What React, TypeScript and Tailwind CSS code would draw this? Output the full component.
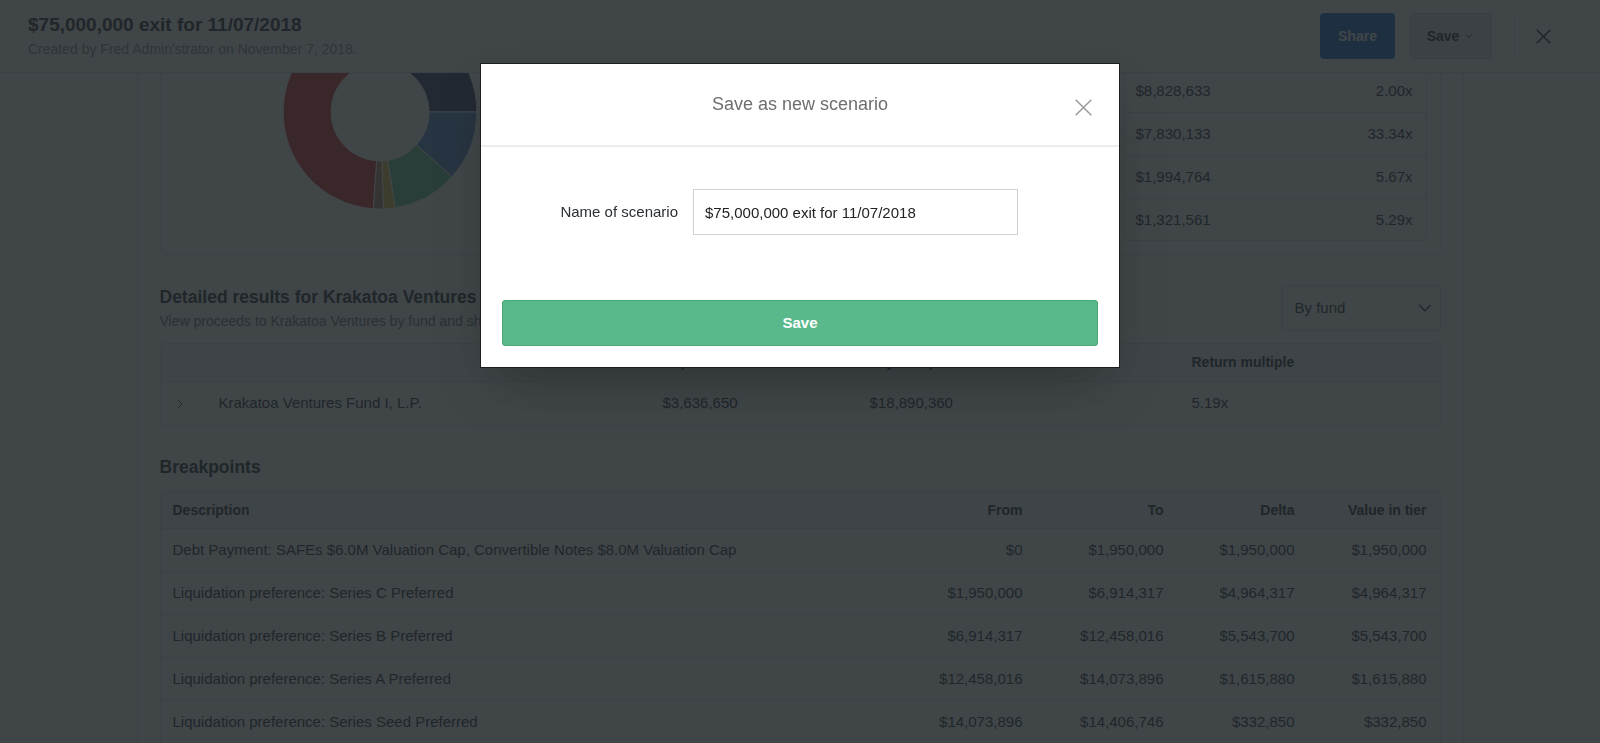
import { ChevronDown, ChevronRight } from 'lucide-react';

type Segment = { label: string; from: number; to: number; color: string };

const segments: Segment[] = [
  { label: 'Series C Preferred', from: 0, to: 90, color: '#40456c' },
  { label: 'Series B Preferred', from: 90, to: 132, color: '#5b8fd0' },
  { label: 'Series A Preferred', from: 132, to: 171, color: '#6fcf97' },
  { label: 'Series Seed Preferred', from: 171, to: 178, color: '#f2c94c' },
  { label: 'Convertible Notes', from: 178, to: 184, color: '#b98a6a' },
  { label: 'Common', from: 184, to: 360, color: '#cf3a3a' },
];

function arcPath(cx: number, cy: number, R: number, r: number, a0: number, a1: number) {
  const pt = (rad: number, deg: number) => {
    const t = (deg * Math.PI) / 180;
    return `${(cx + rad * Math.sin(t)).toFixed(2)} ${(cy - rad * Math.cos(t)).toFixed(2)}`;
  };
  const large = a1 - a0 > 180 ? 1 : 0;
  return `M ${pt(R, a0)} A ${R} ${R} 0 ${large} 1 ${pt(R, a1)} L ${pt(r, a1)} A ${r} ${r} 0 ${large} 0 ${pt(r, a0)} Z`;
}

const summaryRows = [
  ['$44,710,029', '1.45x'],
  ['$8,828,633', '2.00x'],
  ['$7,830,133', '33.34x'],
  ['$1,994,764', '5.67x'],
  ['$1,321,561', '5.29x'],
];

const breakpoints = [
  ['Debt Payment: SAFEs $6.0M Valuation Cap, Convertible Notes $8.0M Valuation Cap', '$0', '$1,950,000', '$1,950,000', '$1,950,000'],
  ['Liquidation preference: Series C Preferred', '$1,950,000', '$6,914,317', '$4,964,317', '$4,964,317'],
  ['Liquidation preference: Series B Preferred', '$6,914,317', '$12,458,016', '$5,543,700', '$5,543,700'],
  ['Liquidation preference: Series A Preferred', '$12,458,016', '$14,073,896', '$1,615,880', '$1,615,880'],
  ['Liquidation preference: Series Seed Preferred', '$14,073,896', '$14,406,746', '$332,850', '$332,850'],
  ['Pro rata: Common, Series Seed Preferred, Series A Preferred', '$14,406,746', '$75,000,000', '$60,593,254', '$60,593,254'],
];

function Donut() {
  return (
    <svg width="196" height="196" viewBox="0 0 196 196">
      {segments.map((s) => (
        <path key={s.label} d={arcPath(98, 98, 97, 49, s.from, s.to)} fill={s.color} stroke="#ffffff" strokeWidth="1" />
      ))}
    </svg>
  );
}

function Header() {
  return (
    <header className="relative z-10 flex h-[73px] shrink-0 items-center border-b border-[#e3e5e8] bg-white pl-[28px] pr-[28px]">
      <div className="flex-1">
        <h1 className="text-[19px] font-bold leading-[24px] text-[#2b2f33]">$75,000,000 exit for 11/07/2018</h1>
        <p className="mt-[2px] text-[14px] leading-[20px] text-[#8a8f95]">Created by Fred Admin'strator on November 7, 2018.</p>
      </div>
      <button className="h-[46px] w-[75px] rounded-[4px] bg-[#1f6cd2] text-[14px] font-bold text-white">Share</button>
      <button className="ml-[15px] flex h-[46px] w-[82px] items-center justify-center gap-[4px] rounded-[4px] border border-[#d0d4d9] bg-[#e1e4e8] text-[14px] font-bold text-[#2b2f33]">
        Save
        <ChevronDown size={12} strokeWidth={2} />
      </button>
      <div className="ml-[22px] h-[46px] border-l border-[#e3e5e8]" />
      <div className="flex w-[57px] justify-center">
        <svg width="15" height="15" viewBox="0 0 15 15">
          <path d="M0.7 0.7 L14.3 14.3 M14.3 0.7 L0.7 14.3" stroke="#2b2f33" strokeWidth="1.6" fill="none" />
        </svg>
      </div>
    </header>
  );
}

function SummaryBox() {
  return (
    <div className="flex h-[286px] shrink-0 rounded-[4px] border border-[#e3e5e8] p-[13px]">
      <div className="flex w-[412px] items-center justify-center">
        <Donut />
      </div>
      <ul className="flex flex-col justify-center gap-[10px] pl-[40px] text-[14px] text-[#555]">
        {segments.map((s) => (
          <li key={s.label} className="flex items-center gap-[8px]">
            <span className="h-[10px] w-[10px] rounded-full" style={{ backgroundColor: s.color }} />
            {s.label}
          </li>
        ))}
      </ul>
      <div className="ml-auto flex w-[303px] flex-col overflow-hidden rounded-[4px] border border-[#e3e5e8] text-[15px] text-[#2b2f33]">
        <div className="flex h-[43px] shrink-0 items-center justify-between border-b border-[#e3e5e8] bg-[#f2f3f5] pl-[11px] pr-[13px] text-[14px] font-bold">
          <span>Proceeds</span>
          <span>Multiple</span>
        </div>
        {summaryRows.map(([value, mult], i) => (
          <div
            key={value}
            className={`flex h-[43px] shrink-0 items-center justify-between pl-[11px] pr-[13px] ${i < summaryRows.length - 1 ? 'border-b border-[#e3e5e8]' : ''}`}
          >
            <span>{value}</span>
            <span>{mult}</span>
          </div>
        ))}
      </div>
    </div>
  );
}

function FundResults() {
  return (
    <>
      <div className="mt-[30px] flex items-start justify-between">
        <div>
          <h2 className="text-[17.5px] font-bold leading-[24px] text-[#2b2f33]">Detailed results for Krakatoa Ventures</h2>
          <p className="mt-[2px] text-[14px] leading-[20px] text-[#6b7177]">View proceeds to Krakatoa Ventures by fund and share class.</p>
        </div>
        <div className="flex h-[46px] w-[159px] items-center justify-between rounded-[4px] border border-[#d5d9de] pl-[12px] pr-[4px] text-[15px] text-[#2b2f33]">
          By fund
          <ChevronDown size={22} strokeWidth={1.4} />
        </div>
      </div>
      <div className="mt-[12px] shrink-0 overflow-hidden rounded-[4px] border border-[#e3e5e8] text-[15px] text-[#2b2f33]">
        <div className="flex h-[38px] items-center border-b border-[#e3e5e8] bg-[#f2f3f5] pl-[11px] text-[14px] font-bold">
          <span className="w-[47px]" />
          <span className="w-[444px]" />
          <span className="w-[207px]">Capital invested</span>
          <span className="w-[322px]">Payout upon exit</span>
          <span>Return multiple</span>
        </div>
        <div className="flex h-[43px] items-center pl-[11px]">
          <span className="flex w-[47px] text-[#555]">
            <ChevronRight size={16} strokeWidth={1.5} />
          </span>
          <span className="w-[444px]">Krakatoa Ventures Fund I, L.P.</span>
          <span className="w-[207px]">$3,636,650</span>
          <span className="w-[322px]">$18,890,360</span>
          <span>5.19x</span>
        </div>
      </div>
    </>
  );
}

function Breakpoints() {
  return (
    <>
      <h2 className="mt-[29px] text-[17.5px] font-bold leading-[24px] text-[#2b2f33]">Breakpoints</h2>
      <div className="mt-[12px] shrink-0 overflow-hidden rounded-t-[4px] border border-[#e3e5e8] text-[15px] text-[#2b2f33]">
        <div className="grid h-[37px] grid-cols-[1fr_140px_141px_131px_132px] items-center border-b border-[#e3e5e8] bg-[#f2f3f5] pl-[12px] pr-[13px] text-[14px] font-bold">
          <span>Description</span>
          <span className="text-right">From</span>
          <span className="text-right">To</span>
          <span className="text-right">Delta</span>
          <span className="text-right">Value in tier</span>
        </div>
        {breakpoints.map((row) => (
          <div
            key={row[0]}
            className="grid h-[43px] grid-cols-[1fr_140px_141px_131px_132px] items-center border-b border-[#e3e5e8] pl-[12px] pr-[13px]"
          >
            <span>{row[0]}</span>
            <span className="text-right">{row[1]}</span>
            <span className="text-right">{row[2]}</span>
            <span className="text-right">{row[3]}</span>
            <span className="text-right">{row[4]}</span>
          </div>
        ))}
      </div>
    </>
  );
}

function SaveModal() {
  return (
    <div className="fixed inset-0 z-50 flex justify-center bg-[#1e2428]/85 pt-[63px]">
      <div className="relative h-[305px] w-[640px] border border-[#1c1f22] bg-white shadow-2xl">
        <div className="flex h-[83px] items-center justify-center border-b-2 border-[#ececec]">
          <h3 className="text-[18px] text-[#6e6e6e]">Save as new scenario</h3>
        </div>
        <button className="absolute right-[27px] top-[35px]">
          <svg width="17" height="17" viewBox="0 0 17 17">
            <path d="M0.7 0.7 L16.3 16.3 M16.3 0.7 L0.7 16.3" stroke="#9a9a9a" strokeWidth="1.5" fill="none" />
          </svg>
        </button>
        <div className="px-[21px] pt-[42px]">
          <div className="flex items-center">
            <label className="w-[176px] text-right text-[15px] text-[#2b2f33]">Name of scenario</label>
            <input
              className="ml-[15px] h-[46px] w-[325px] border border-[#cfcfcf] px-[11px] text-[15px] text-[#222] outline-none"
              defaultValue="$75,000,000 exit for 11/07/2018"
            />
          </div>
          <button className="mt-[65px] h-[46px] w-full rounded-[3px] border border-[#45a876] bg-[#5ab98b] text-[15px] font-bold text-white">
            Save
          </button>
        </div>
      </div>
    </div>
  );
}

export default function App() {
  return (
    <div className="flex h-screen flex-col overflow-hidden bg-white font-['Liberation_Sans',Arial,sans-serif]">
      <Header />
      <main className="flex-1 overflow-hidden bg-white">
        <div className="mx-auto flex h-[1200px] w-[1327px] flex-col border-x border-[#e3e5e8] bg-white px-[22px]">
          <div className="-mt-[104px] flex flex-col">
            <SummaryBox />
            <FundResults />
            <Breakpoints />
          </div>
        </div>
      </main>
      <SaveModal />
    </div>
  );
}
